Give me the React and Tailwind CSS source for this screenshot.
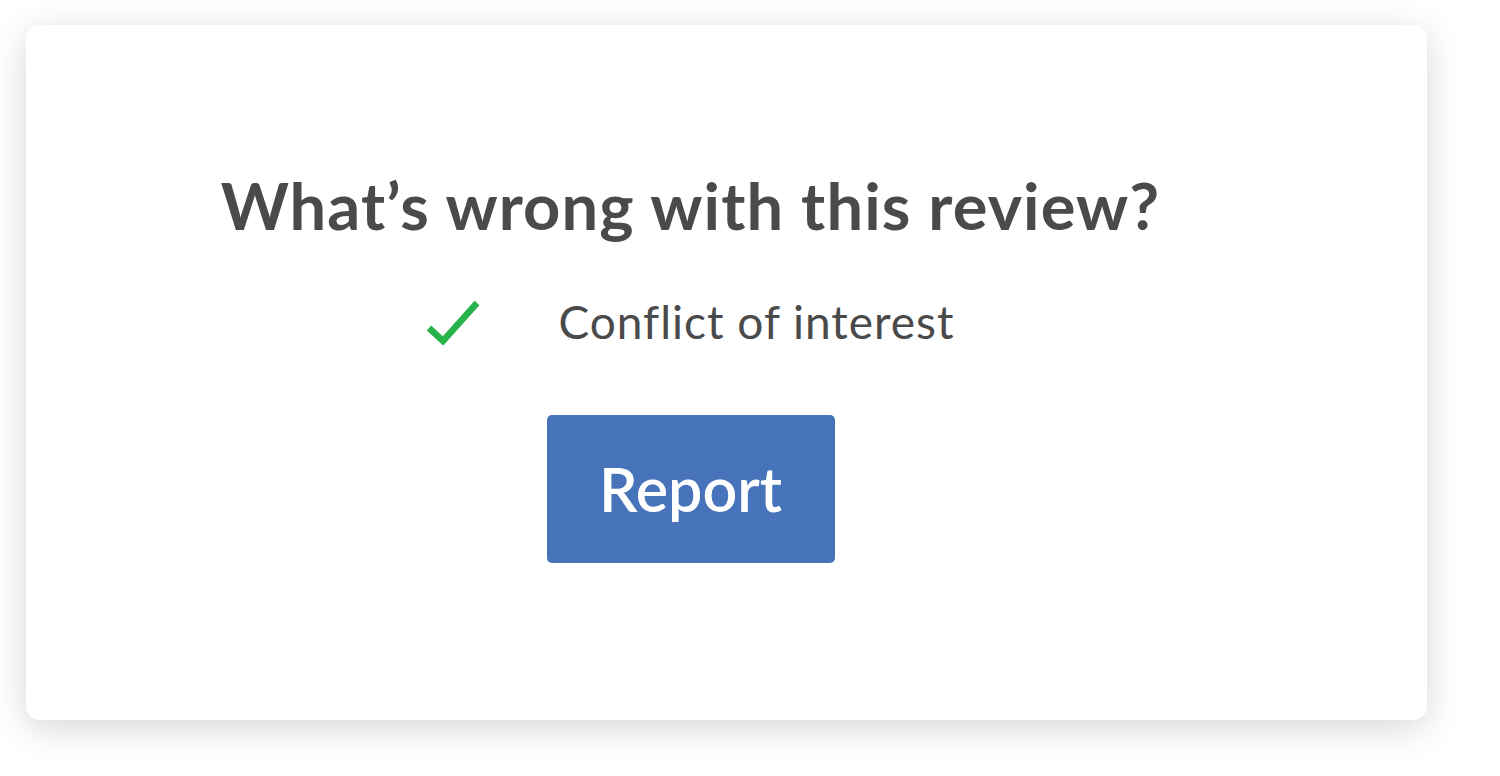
export default function App() {
  return (
    <div className="w-[1500px] h-[776px] bg-white pt-[25px] pl-[26px]" style={{ fontFamily: "Lato, 'Open Sans', sans-serif" }}>
      <div className="w-[1401px] h-[695px] bg-white rounded-[14px] shadow-[0_8px_36px_rgba(0,0,0,0.16)] flex flex-col items-center pr-[72px] pt-[148px]">
        <h1 className="text-[65px] leading-[65px] font-bold text-[#4a4a4a] tracking-[1.1px]">What’s wrong with this review?</h1>
        <div className="flex items-center mt-[59px] gap-[78px]">
          <svg width="54" height="46" viewBox="0 0 54 46">
            <path d="M3 29 L17 42 L51 4" fill="none" stroke="#27b34b" strokeWidth="6.5" strokeLinecap="butt" strokeLinejoin="miter" />
          </svg>
          <span className="text-[46px] leading-[50px] text-[#4a4a4a] tracking-[1px]">Conflict of interest</span>
        </div>
        <button className="mt-[68px] w-[288px] h-[148px] bg-[#4673b9] rounded-[5px] text-white text-[61px] font-semibold">Report</button>
      </div>
    </div>
  );
}
